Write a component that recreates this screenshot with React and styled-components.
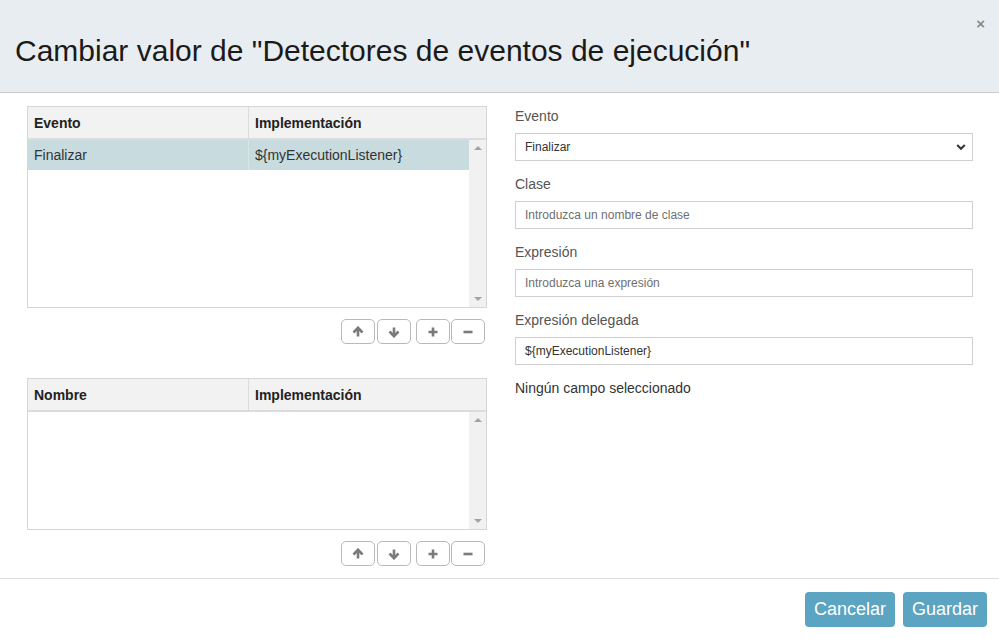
import React from "react";
import styled, { createGlobalStyle } from "styled-components";

const Global = createGlobalStyle`
  html, body { margin: 0; padding: 0; background: #fff; }
  body { font-family: "Liberation Sans", Arial, sans-serif; color: #333; }
  * { box-sizing: border-box; }
`;

const Modal = styled.div`
  width: 999px;
  height: 639px;
  display: flex;
  flex-direction: column;
  background: #fff;
`;

const Header = styled.div`
  height: 93px;
  background: #e8edf1;
  border-bottom: 1px solid #c9ced2;
  display: flex;
  align-items: flex-start;
  justify-content: space-between;
  padding: 0 15px;
`;

const Title = styled.h1`
  margin: 0;
  margin-top: 34px;
  font-size: 30px;
  line-height: 34px;
  font-weight: normal;
  color: #1a1a1a;
`;

const Close = styled.span`
  margin-top: 14px;
  margin-right: -1px;
  font-size: 15px;
  line-height: 20px;
  font-weight: bold;
  color: #8a8a8a;
`;

const Body = styled.div`
  flex: 1;
  display: grid;
  grid-template-columns: 460px 458px;
  column-gap: 28px;
  padding: 13px 0 0 27px;
`;

const LeftCol = styled.div`
  display: flex;
  flex-direction: column;
`;

const Table = styled.div`
  height: ${(p) => p.$h}px;
  border: 1px solid #d6d6d6;
  display: flex;
  flex-direction: column;
  margin-top: ${(p) => p.$mt || 0}px;
`;

const HeadRow = styled.div`
  height: 33px;
  display: grid;
  grid-template-columns: 220px 1fr;
  background: #f2f2f2;
  border-bottom: 2px solid #dcdcdc;
`;

const HeadCell = styled.div`
  display: flex;
  align-items: center;
  padding-left: 6px;
  font-size: 14px;
  font-weight: bold;
  color: #222;
  border-left: ${(p) => (p.$first ? "none" : "1px solid #dcdcdc")};
`;

const TableBody = styled.div`
  flex: 1;
  display: flex;
  min-height: 0;
`;

const Rows = styled.div`
  flex: 1;
  display: flex;
  flex-direction: column;
`;

const Row = styled.div`
  height: 30px;
  display: grid;
  grid-template-columns: 220px 1fr;
  background: ${(p) => (p.$selected ? "#c8dce0" : "transparent")};
`;

const Cell = styled.div`
  display: flex;
  align-items: center;
  padding-left: 6px;
  font-size: 14px;
  color: #333;
  border-left: ${(p) => (p.$first ? "none" : "1px solid #d9e4e6")};
`;

const Scrollbar = styled.div`
  width: 17px;
  background: #f1f1f1;
  display: flex;
  flex-direction: column;
  justify-content: space-between;
  align-items: center;
  padding: 6px 0 6px;
`;

const Arrow = styled.div`
  width: 0;
  height: 0;
  border-left: 4px solid transparent;
  border-right: 4px solid transparent;
  ${(p) =>
    p.$down
      ? "border-top: 4px solid #a3a3a3;"
      : "border-bottom: 4px solid #a3a3a3;"}
`;

const BtnRow = styled.div`
  display: flex;
  justify-content: flex-end;
  margin-top: 11px;
  margin-right: 2px;
  gap: 5px;
`;

const BtnGroup = styled.div`
  display: flex;
  gap: ${(p) => p.$gap}px;
`;

const SmallBtn = styled.div`
  width: 34px;
  height: 25px;
  border: 1px solid #b9b9b9;
  border-radius: 5px;
  background: #fff;
  display: flex;
  align-items: center;
  justify-content: center;
`;

const RightCol = styled.div`
  display: flex;
  flex-direction: column;
`;

const Group = styled.div`
  display: flex;
  flex-direction: column;
  margin-bottom: 13px;
`;

const Label = styled.div`
  font-size: 14px;
  line-height: 20px;
  color: #555;
  margin-bottom: 7px;
`;

const Control = styled.div`
  height: 28px;
  border: 1px solid #cfcfcf;
  display: flex;
  align-items: center;
  justify-content: space-between;
  padding: 0 6px 0 9px;
  font-size: 12px;
  color: ${(p) => (p.$placeholder ? "#6f6f6f" : "#333")};
  background: #fff;
`;

const Info = styled.div`
  font-size: 14px;
  line-height: 20px;
  color: #333;
`;

const Footer = styled.div`
  height: 61px;
  border-top: 1px solid #dedede;
  display: flex;
  justify-content: flex-end;
  align-items: flex-start;
  padding: 13px 12px 0 0;
  gap: 8px;
`;

const MainBtn = styled.div`
  height: 35px;
  padding: 0 9px;
  border-radius: 4px;
  background: #5ba5c3;
  color: #fff;
  font-size: 18px;
  display: flex;
  align-items: center;
`;

const Icon = ({ kind }) => {
  const common = { width: 12, height: 12, viewBox: "0 0 12 12" };
  if (kind === "up")
    return (
      <svg {...common}>
        <path d="M6 10.5V3" stroke="#7a7a7a" strokeWidth="2.6" fill="none" />
        <path d="M1.5 6.5L6 1.8L10.5 6.5" stroke="#7a7a7a" strokeWidth="2.6" fill="none" />
      </svg>
    );
  if (kind === "down")
    return (
      <svg {...common}>
        <path d="M6 1.5V9" stroke="#7a7a7a" strokeWidth="2.6" fill="none" />
        <path d="M1.5 5.5L6 10.2L10.5 5.5" stroke="#7a7a7a" strokeWidth="2.6" fill="none" />
      </svg>
    );
  if (kind === "plus")
    return (
      <svg {...common}>
        <path d="M6 1.5V10.5M1.5 6H10.5" stroke="#7a7a7a" strokeWidth="2.6" fill="none" />
      </svg>
    );
  return (
    <svg {...common}>
      <path d="M1.5 6H10.5" stroke="#7a7a7a" strokeWidth="2.6" fill="none" />
    </svg>
  );
};

const Chevron = () => (
  <svg width="10" height="8" viewBox="0 0 10 8">
    <path d="M1.2 2L5 5.8L8.8 2" stroke="#333" strokeWidth="2" fill="none" />
  </svg>
);

const Buttons = () => (
  <BtnRow>
    <BtnGroup $gap={2}>
      <SmallBtn><Icon kind="up" /></SmallBtn>
      <SmallBtn><Icon kind="down" /></SmallBtn>
    </BtnGroup>
    <BtnGroup $gap={1}>
      <SmallBtn><Icon kind="plus" /></SmallBtn>
      <SmallBtn><Icon kind="minus" /></SmallBtn>
    </BtnGroup>
  </BtnRow>
);

const DataTable = ({ h, mt, cols, rows }) => (
  <Table $h={h} $mt={mt}>
    <HeadRow>
      <HeadCell $first>{cols[0]}</HeadCell>
      <HeadCell>{cols[1]}</HeadCell>
    </HeadRow>
    <TableBody>
      <Rows>
        {rows.map((r, i) => (
          <Row key={i} $selected={r.selected}>
            <Cell $first>{r.a}</Cell>
            <Cell>{r.b}</Cell>
          </Row>
        ))}
      </Rows>
      <Scrollbar>
        <Arrow />
        <Arrow $down />
      </Scrollbar>
    </TableBody>
  </Table>
);

export default function App() {
  return (
    <>
      <Global />
      <Modal>
        <Header>
          <Title>Cambiar valor de "Detectores de eventos de ejecución"</Title>
          <Close>×</Close>
        </Header>
        <Body>
          <LeftCol>
            <DataTable
              h={202}
              cols={["Evento", "Implementación"]}
              rows={[{ a: "Finalizar", b: "${myExecutionListener}", selected: true }]}
            />
            <Buttons />
            <DataTable h={152} mt={34} cols={["Nombre", "Implementación"]} rows={[]} />
            <Buttons />
          </LeftCol>
          <RightCol>
            <Group>
              <Label>Evento</Label>
              <Control>
                <span>Finalizar</span>
                <Chevron />
              </Control>
            </Group>
            <Group>
              <Label>Clase</Label>
              <Control $placeholder>Introduzca un nombre de clase</Control>
            </Group>
            <Group>
              <Label>Expresión</Label>
              <Control $placeholder>Introduzca una expresión</Control>
            </Group>
            <Group>
              <Label>Expresión delegada</Label>
              <Control>${"{myExecutionListener}"}</Control>
            </Group>
            <Info>Ningún campo seleccionado</Info>
          </RightCol>
        </Body>
        <Footer>
          <MainBtn>Cancelar</MainBtn>
          <MainBtn>Guardar</MainBtn>
        </Footer>
      </Modal>
    </>
  );
}
